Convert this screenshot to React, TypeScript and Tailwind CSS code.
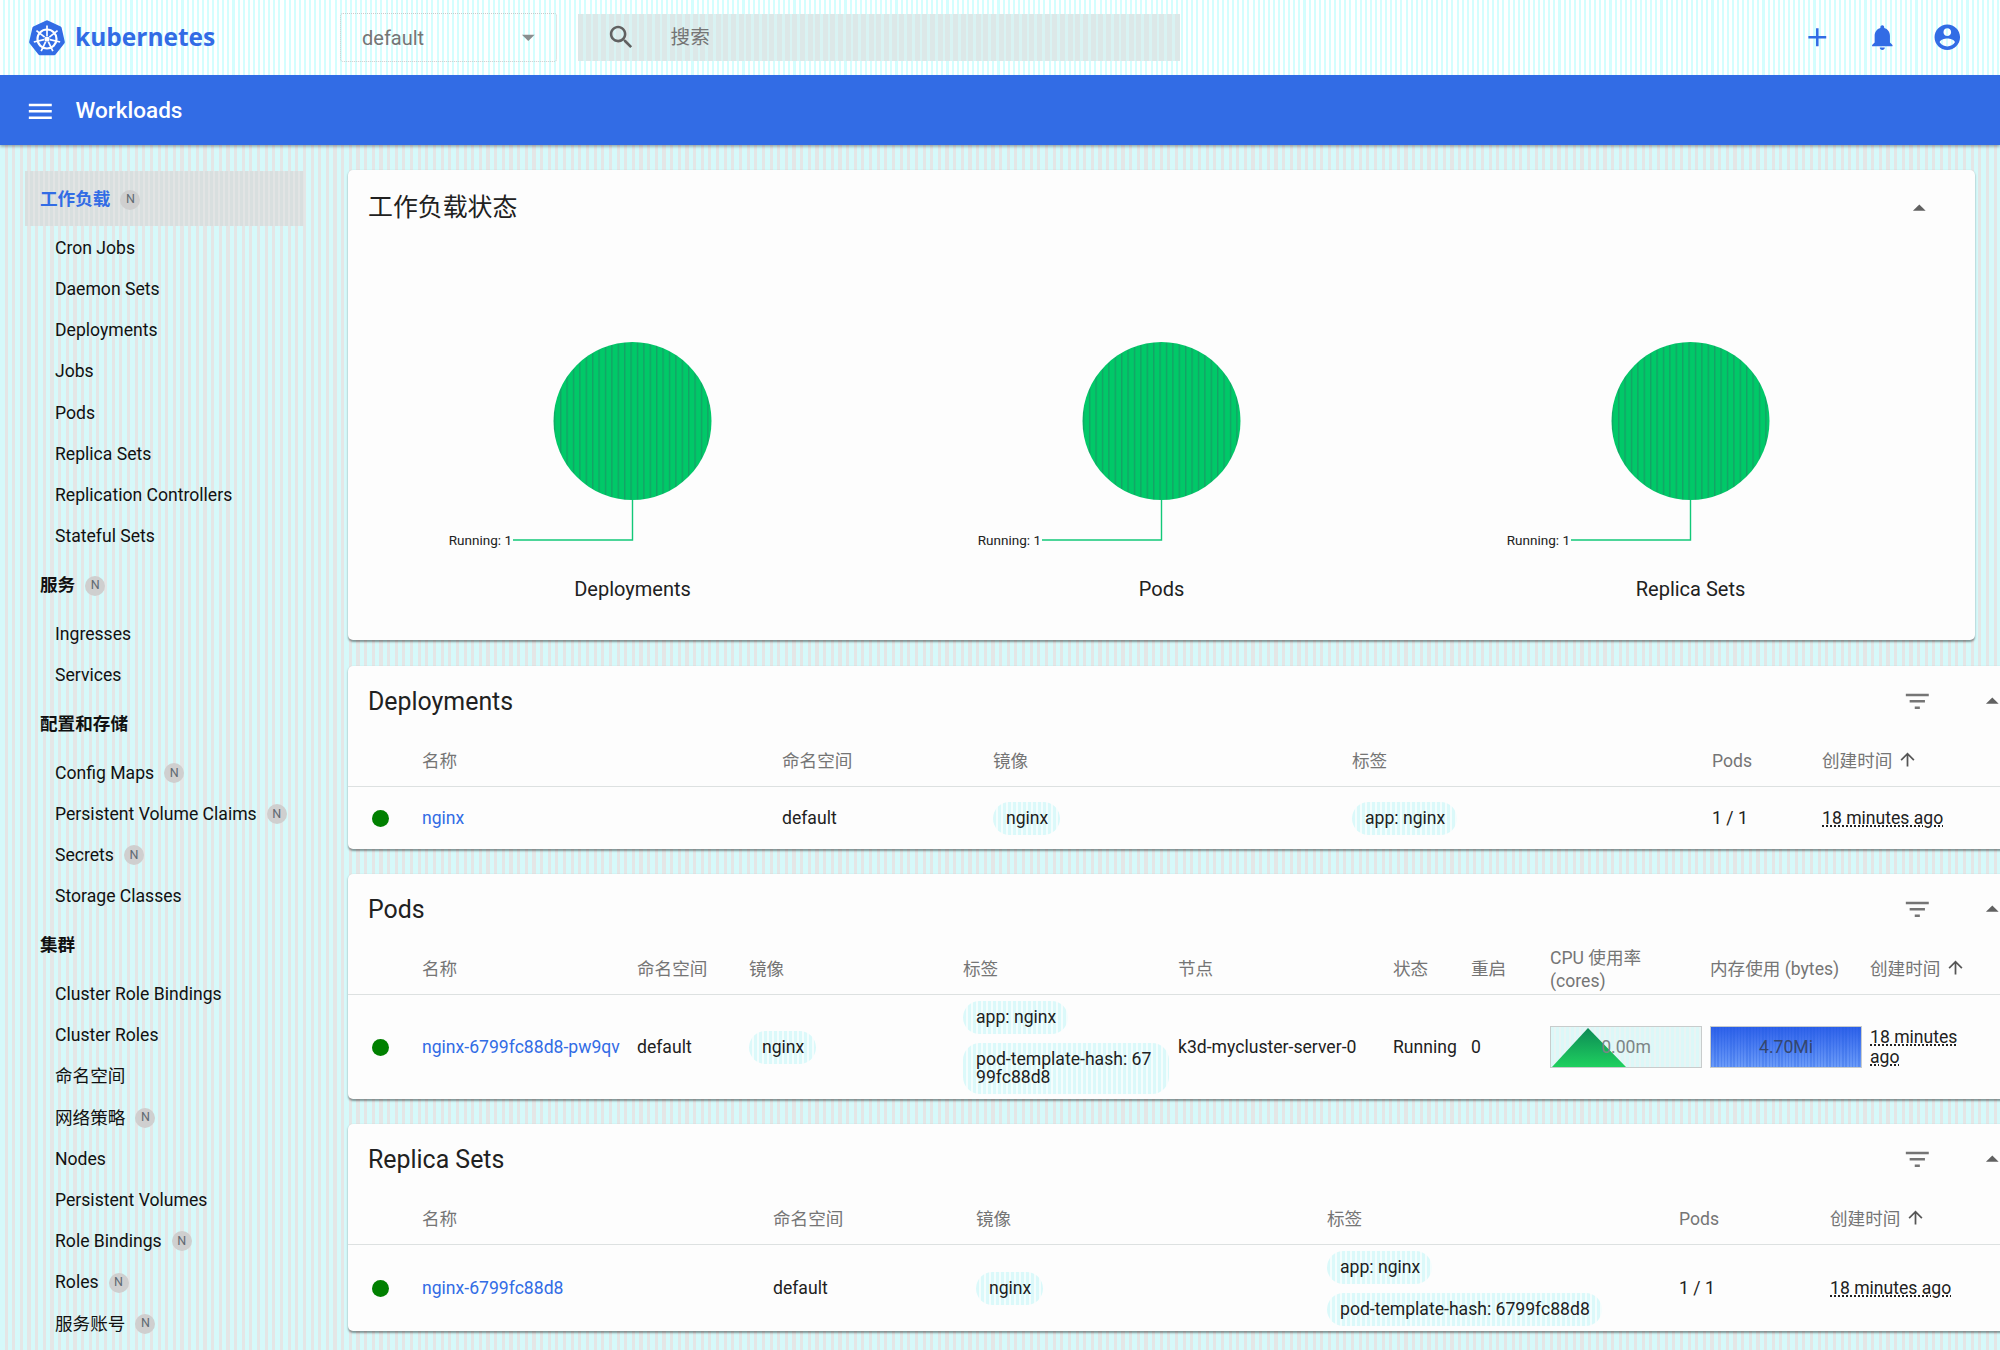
import React from 'react';

const iconPaths = {
  search: 'M15.5 14h-.79l-.28-.27C15.41 12.59 16 11.11 16 9.5 16 5.91 13.09 3 9.5 3S3 5.91 3 9.5 5.91 16 9.5 16c1.61 0 3.09-.59 4.23-1.57l.27.28v.79l5 4.99L20.49 19l-4.99-5zm-6 0C7.01 14 5 11.99 5 9.5S7.01 5 9.5 5 14 7.01 14 9.5 11.99 14 9.5 14z',
  menu: 'M3 18h18v-2H3v2zm0-5h18v-2H3v2zm0-7v2h18V6H3z',
  add: 'M19 13h-6v6h-2v-6H5v-2h6V5h2v6h6v2z',
  bell: 'M12 22c1.1 0 2-.9 2-2h-4c0 1.1.89 2 2 2zm6-6v-5c0-3.07-1.64-5.64-4.5-6.32V4c0-.83-.67-1.5-1.5-1.5s-1.5.67-1.5 1.5v.68C7.63 5.36 6 7.92 6 11v5l-2 2v1h16v-1l-2-2z',
  account: 'M12 2C6.48 2 2 6.48 2 12s4.48 10 10 10 10-4.48 10-10S17.52 2 12 2zm0 3c1.66 0 3 1.34 3 3s-1.34 3-3 3-3-1.34-3-3 1.34-3 3-3zm0 14.2c-2.5 0-4.71-1.28-6-3.22.03-1.99 4-3.08 6-3.08 1.99 0 5.97 1.09 6 3.08-1.29 1.94-3.5 3.22-6 3.22z',
  filter: 'M10 18h4v-2h-4v2zM3 6v2h18V6H3zm3 7h12v-2H6v2z',
  up: 'M4 12l1.41 1.41L11 7.83V20h2V7.83l5.58 5.59L20 12l-8-8-8 8z',
  dropUp: 'M7 14l5-5 5 5z',
  dropDown: 'M7 10l5 5 5-5z',
};

const Icon = ({ name, className }: { name: keyof typeof iconPaths; className: string }) => (
  <svg viewBox="0 0 24 24" fill="currentColor" className={className}>
    <path d={iconPaths[name]} />
  </svg>
);

const Logo = () => (
  <svg viewBox="0 0 38 38" className="w-[38px] h-[38px] shrink-0">
    <polygon
      points="19,3 31.9,9.2 35.1,23.2 26.2,34.4 11.8,34.4 2.9,23.2 6.1,9.2"
      fill="#326ce5"
      stroke="#326ce5"
      strokeWidth="3.5"
      strokeLinejoin="round"
    />
    <circle cx="19" cy="20" r="9.5" fill="none" stroke="#fff" strokeWidth="2.2" />
    <circle cx="19" cy="20" r="2.6" fill="#fff" />
    {[0, 1, 2, 3, 4, 5, 6].map(k => (
      <line
        key={k}
        x1="19"
        y1="17"
        x2="19"
        y2="6.5"
        stroke="#fff"
        strokeWidth="1.7"
        transform={`rotate(${k * 51.43} 19 20)`}
      />
    ))}
  </svg>
);

type NavItem = { label: string; n?: boolean };

const nav: { title: string; active?: boolean; n?: boolean; items: NavItem[] }[] = [
  {
    title: '工作负载',
    active: true,
    n: true,
    items: [
      { label: 'Cron Jobs' },
      { label: 'Daemon Sets' },
      { label: 'Deployments' },
      { label: 'Jobs' },
      { label: 'Pods' },
      { label: 'Replica Sets' },
      { label: 'Replication Controllers' },
      { label: 'Stateful Sets' },
    ],
  },
  { title: '服务', n: true, items: [{ label: 'Ingresses' }, { label: 'Services' }] },
  {
    title: '配置和存储',
    items: [
      { label: 'Config Maps', n: true },
      { label: 'Persistent Volume Claims', n: true },
      { label: 'Secrets', n: true },
      { label: 'Storage Classes' },
    ],
  },
  {
    title: '集群',
    items: [
      { label: 'Cluster Role Bindings' },
      { label: 'Cluster Roles' },
      { label: '命名空间' },
      { label: '网络策略', n: true },
      { label: 'Nodes' },
      { label: 'Persistent Volumes' },
      { label: 'Role Bindings', n: true },
      { label: 'Roles', n: true },
      { label: '服务账号', n: true },
    ],
  },
];

const Badge = () => (
  <span className="ml-[10px] w-[20px] h-[20px] rounded-full bg-[#cfcfcf] text-[#5f6a72] text-[12.5px] font-normal flex items-center justify-center">
    N
  </span>
);

const Sidebar = () => (
  <aside className="w-[348px] shrink-0 pt-[26px] pl-[25px]">
    {nav.map(group => (
      <div key={group.title}>
        <div
          className={`w-[279px] h-[55px] pl-[15px] pt-[2px] flex items-center font-bold mb-[1.5px] ${
            group.active
              ? 'text-[#326ce5] bg-[image:repeating-linear-gradient(90deg,#d8dfdf_0px,#d8dfdf_3px,#e2e4e4_3px,#e2e4e4_5px)]'
              : 'text-[#111]'
          }`}
        >
          {group.title}
          {group.n && <Badge />}
        </div>
        {group.items.map(item => (
          <div key={item.label} className="h-[41.2px] pl-[30px] flex items-center text-[#111]">
            {item.label}
            {item.n && <Badge />}
          </div>
        ))}
      </div>
    ))}
  </aside>
);

const Chart = ({ id, title }: { id: string; title: string }) => (
  <div className="flex-1 flex flex-col items-center">
    <svg viewBox="0 0 529 210" className="w-[529px] h-[210px] block">
      <defs>
        <pattern id={id} width="6.4" height="10" patternUnits="userSpaceOnUse">
          <rect width="6.4" height="10" fill="#00c968" />
          <rect width="1.4" height="10" fill="#14a266" />
        </pattern>
      </defs>
      <circle cx="264.5" cy="81" r="79" fill={`url(#${id})`} />
      <path d="M264.5 160V200H145" fill="none" stroke="#12c878" strokeWidth="1.4" />
      <text x="144" y="204.5" textAnchor="end" fontSize="13.5" fill="#212121">
        Running: 1
      </text>
    </svg>
    <div className="mt-[27px] text-[20px] leading-[24px] text-[#212121]">{title}</div>
  </div>
);

const Chip = ({ children, className = '' }: { children: React.ReactNode; className?: string }) => (
  <span
    className={`inline-block w-fit rounded-[17px] pl-[13px] pr-[12px] py-[7.5px] leading-[18px] text-[#212121] bg-[image:repeating-linear-gradient(90deg,#dbf9fa_0px,#dbf9fa_3px,#f4fdfd_3px,#f4fdfd_5px)] ${className}`}
  >
    {children}
  </span>
);

const Dot = () => <span className="ml-[23.5px] block w-[17px] h-[17px] rounded-full bg-[#008000]" />;

const Link = ({ children }: { children: React.ReactNode }) => <span className="text-[#326ce5]">{children}</span>;

const Ago = ({ text }: { text: string }) => (
  <span className="underline decoration-dotted underline-offset-[2px]">{text}</span>
);

const Head = ({ cols, labels }: { cols: string; labels: React.ReactNode[] }) => (
  <div className={`grid ${cols} h-[51px] items-center border-b border-[#dde1e1] text-[#757575]`}>
    <div />
    {labels.map((l, i) => (
      <div key={i}>{l}</div>
    ))}
  </div>
);

const SortHead = () => (
  <div className="flex items-center">
    创建时间
    <Icon name="up" className="ml-[5px] -mt-[2px] w-[21px] h-[21px] text-[#555555]" />
  </div>
);

const TableCard = ({
  title,
  className,
  children,
}: {
  title: string;
  className: string;
  children: React.ReactNode;
}) => (
  <section
    className={`w-[1700px] shrink-0 flex flex-col bg-[#fdfdfd] rounded-[5px] shadow-[0_1.5px_2px_rgba(0,0,0,0.4)] ${className}`}
  >
    <div className="h-[70px] pl-[20px] pr-[40px] flex items-center">
      <h2 className="pt-[2px] text-[24.9px] text-[#212121] font-normal">{title}</h2>
      <Icon name="filter" className="ml-auto w-[30.6px] h-[30.6px] text-[#757575]" />
      <Icon name="dropUp" className="ml-[45px] w-[30.6px] h-[30.6px] text-[#616161]" />
    </div>
    {children}
  </section>
);

const deployCols = 'grid-cols-[74px_360px_211px_359px_360px_110px_220px]';
const podCols = 'grid-cols-[74px_215px_112px_214px_215px_215px_78px_79px_160px_160px_105px]';
const rsCols = 'grid-cols-[74px_351px_203px_351px_352px_151px_220px]';

const Spark = ({ label, kind }: { label: string; kind: 'cpu' | 'mem' }) => (
  <div
    className={`relative w-[152px] h-[42px] border border-[#c8cccc] flex items-center justify-center text-[#7d8586] ${
      kind === 'cpu'
        ? 'bg-[image:repeating-linear-gradient(90deg,#dcf8f8_0px,#dcf8f8_3px,#eaf4f4_3px,#eaf4f4_5px)]'
        : 'bg-[image:repeating-linear-gradient(90deg,rgba(30,90,225,0.28)_0px,rgba(30,90,225,0.28)_1.5px,transparent_1.5px,transparent_3.2px),linear-gradient(180deg,#2d60ea,#6c9cf8)]'
    }`}
  >
    {kind === 'cpu' && (
      <svg viewBox="0 0 150 40" className="absolute inset-0 w-full h-full">
        <defs>
          <linearGradient id="cpuFill" x1="0" y1="0" x2="0" y2="1">
            <stop offset="0" stopColor="#0c8a55" />
            <stop offset="1" stopColor="#1fd05f" />
          </linearGradient>
        </defs>
        <polygon points="37,1 1,40 75,40" fill="url(#cpuFill)" />
      </svg>
    )}
    <span className={`relative ${kind === 'mem' ? 'text-[#34466e]' : ''}`}>{label}</span>
  </div>
);

export default function App() {
  return (
    <div className="w-[2000px] h-[1350px] overflow-hidden flex flex-col text-[17.6px] font-['Roboto','Noto_Sans_CJK_SC',sans-serif] bg-[image:repeating-linear-gradient(90deg,#d6f9fa_0px,#d6f9fa_4.5px,#e4e6e6_4.5px,#e4e6e6_7.65px)]">
      <header className="h-[75px] shrink-0 flex items-center bg-[image:repeating-linear-gradient(90deg,#ffffff_0px,#ffffff_3px,#d4fefe_3px,#d4fefe_5.1px)]">
        <div className="w-[340px] shrink-0 pl-[28px] flex items-center">
          <Logo />
          <span className="ml-[9px] text-[24.5px] font-bold font-['Open_Sans',sans-serif] text-[#326ce5]">kubernetes</span>
        </div>
        <div className="w-[217px] h-[49px] shrink-0 pl-[21px] pr-[18px] flex items-center justify-between rounded-[3px] border border-dotted border-[#c8cccc] text-[20px] text-[#757575]">
          <span className="pt-[1px]">default</span>
          <Icon name="dropDown" className="w-[30.6px] h-[30.6px] -mr-[6px] text-[#8a8f90]" />
        </div>
        <div className="ml-[21px] w-[602px] h-[47px] shrink-0 flex items-center text-[19.6px] text-[#757575] bg-[image:repeating-linear-gradient(90deg,#dce8e8_0px,#dce8e8_5px,#d9f3f3_5px,#d9f3f3_7.65px)]">
          <Icon name="search" className="ml-[28px] w-[30.6px] h-[30.6px] text-[#616161]" />
          <span className="ml-[34px] pt-[1px]">搜索</span>
        </div>
        <div className="ml-auto mr-[37px] flex items-center gap-[34.4px] text-[#326ce5]">
          <Icon name="add" className="w-[30.6px] h-[30.6px]" />
          <Icon name="bell" className="w-[30.6px] h-[30.6px]" />
          <Icon name="account" className="w-[30.6px] h-[30.6px]" />
        </div>
      </header>

      <div className="h-[70px] shrink-0 pl-[25px] pt-[2px] flex items-center bg-[#326ce5] text-white shadow-[0_1.5px_3px_rgba(0,0,0,0.35)] z-10">
        <Icon name="menu" className="w-[30.6px] h-[30.6px]" />
        <span className="ml-[20px] text-[22.5px] font-medium">Workloads</span>
      </div>

      <div className="flex flex-1 min-h-0">
        <Sidebar />
        <main className="flex-1 min-w-0 pt-[25px] flex flex-col">
          <section className="w-[1627px] h-[470px] shrink-0 bg-[#fdfdfd] rounded-[5px] shadow-[0_1.5px_2px_rgba(0,0,0,0.4)]">
            <div className="h-[74px] pl-[20px] pr-[40px] flex items-center justify-between">
              <h2 className="pt-[2px] text-[24.9px] text-[#212121] font-normal">工作负载状态</h2>
              <Icon name="dropUp" className="mt-[2px] w-[30.6px] h-[30.6px] text-[#616161]" />
            </div>
            <div className="mt-[96px] px-[20px] flex">
              <Chart id="stripeA" title="Deployments" />
              <Chart id="stripeB" title="Pods" />
              <Chart id="stripeC" title="Replica Sets" />
            </div>
          </section>

          <TableCard title="Deployments" className="mt-[26px] h-[183px]">
            <Head cols={deployCols} labels={['名称', '命名空间', '镜像', '标签', 'Pods', <SortHead />]} />
            <div className={`grid ${deployCols} flex-1 items-center text-[#212121]`}>
              <Dot />
              <Link>nginx</Link>
              <div>default</div>
              <Chip>nginx</Chip>
              <Chip>app: nginx</Chip>
              <div>1 / 1</div>
              <Ago text="18 minutes ago" />
            </div>
          </TableCard>

          <TableCard title="Pods" className="mt-[25px] h-[225px]">
            <Head
              cols={podCols}
              labels={[
                '名称',
                '命名空间',
                '镜像',
                '标签',
                '节点',
                '状态',
                '重启',
                <div className="pt-[2px] leading-[23px]">CPU 使用率<br />(cores)</div>,
                '内存使用 (bytes)',
                <SortHead />,
              ]}
            />
            <div className={`grid ${podCols} flex-1 items-center text-[#212121]`}>
              <Dot />
              <Link>nginx-6799fc88d8-pw9qv</Link>
              <div>default</div>
              <Chip>nginx</Chip>
              <div className="flex flex-col gap-[9px] w-[206px]">
                <Chip>app: nginx</Chip>
                <Chip className="min-w-[206px]">
                  pod-template-hash: 67
                  <br />
                  99fc88d8
                </Chip>
              </div>
              <div>k3d-mycluster-server-0</div>
              <div>Running</div>
              <div>0</div>
              <Spark kind="cpu" label="0.00m" />
              <Spark kind="mem" label="4.70Mi" />
              <div className="w-[100px] leading-[20px]">
                <Ago text="18 minutes ago" />
              </div>
            </div>
          </TableCard>

          <TableCard title="Replica Sets" className="mt-[25px] h-[207px]">
            <Head cols={rsCols} labels={['名称', '命名空间', '镜像', '标签', 'Pods', <SortHead />]} />
            <div className={`grid ${rsCols} flex-1 items-center text-[#212121]`}>
              <Dot />
              <Link>nginx-6799fc88d8</Link>
              <div>default</div>
              <Chip>nginx</Chip>
              <div className="flex flex-col gap-[9px]">
                <Chip>app: nginx</Chip>
                <Chip>pod-template-hash: 6799fc88d8</Chip>
              </div>
              <div>1 / 1</div>
              <Ago text="18 minutes ago" />
            </div>
          </TableCard>
        </main>
      </div>
    </div>
  );
}
